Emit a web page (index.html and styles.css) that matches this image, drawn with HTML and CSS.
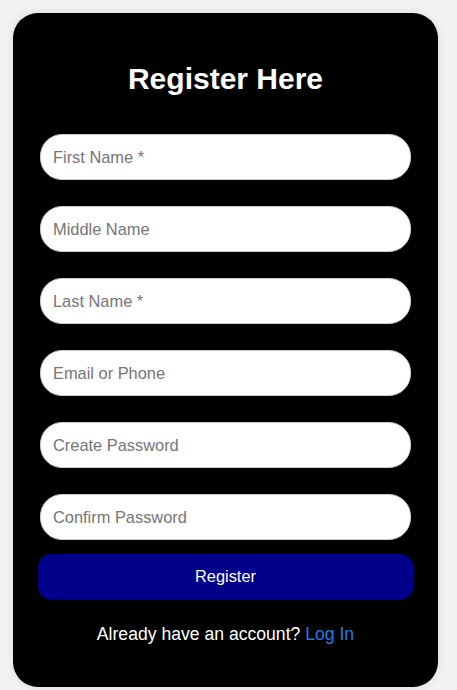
FILE: index.html
```html
<!DOCTYPE html>
<html lang="en">
<head>
<meta charset="utf-8">
<title>Register</title>
<link rel="stylesheet" href="styles.css">
</head>
<body>
<div class="card">
  <h2 class="title">Register Here</h2>
  <form class="form">
    <div class="fields">
      <input class="field" type="text" placeholder="First Name *">
      <input class="field" type="text" placeholder="Middle Name">
      <input class="field" type="text" placeholder="Last Name *">
      <input class="field" type="text" placeholder="Email or Phone">
      <input class="field" type="password" placeholder="Create Password">
      <input class="field" type="password" placeholder="Confirm Password">
    </div>
    <button class="submit" type="button">Register</button>
  </form>
  <p class="footer">Already have an account? <a class="login" href="#">Log In</a></p>
</div>
</body>
</html>
```
FILE: styles.css
```css
html, body {
  margin: 0;
  padding: 0;
  background: #f2f2f2;
  font-family: "Liberation Sans", Arial, sans-serif;
}
body {
  padding: 13px;
}
.card {
  box-sizing: border-box;
  width: 425px;
  height: 674px;
  background: #000;
  border-radius: 25px;
  padding: 49px 27px 0;
  box-shadow: 0 0 10px rgba(0, 0, 0, 0.1);
}
.title {
  margin: 0;
  color: #fff;
  font-size: 30px;
  font-weight: bold;
  line-height: 34.5px;
  text-align: center;
}
.form {
  margin-top: 37.5px;
  display: flex;
  flex-direction: column;
}
.fields {
  display: flex;
  flex-direction: column;
  gap: 26px;
}
.field {
  box-sizing: border-box;
  width: 100%;
  height: 46px;
  margin: 0;
  border: 1px solid #ccc;
  border-radius: 22px;
  padding: 0 12px;
  background: #fff;
  font-family: "Liberation Sans", Arial, sans-serif;
  font-size: 16.4px;
  color: #000;
  outline: none;
}
.field::placeholder {
  color: #757575;
}
.submit {
  margin: 14px -2px 0;
  height: 45px;
  border: none;
  border-radius: 12px;
  background: #00008b;
  color: #fff;
  font-family: "Liberation Sans", Arial, sans-serif;
  font-size: 16.4px;
  cursor: pointer;
}
.footer {
  margin: 24px 0 0;
  color: #fff;
  font-size: 17.6px;
  line-height: 22px;
  text-align: center;
}
.login {
  color: #1e7be6;
  text-decoration: none;
}
```
